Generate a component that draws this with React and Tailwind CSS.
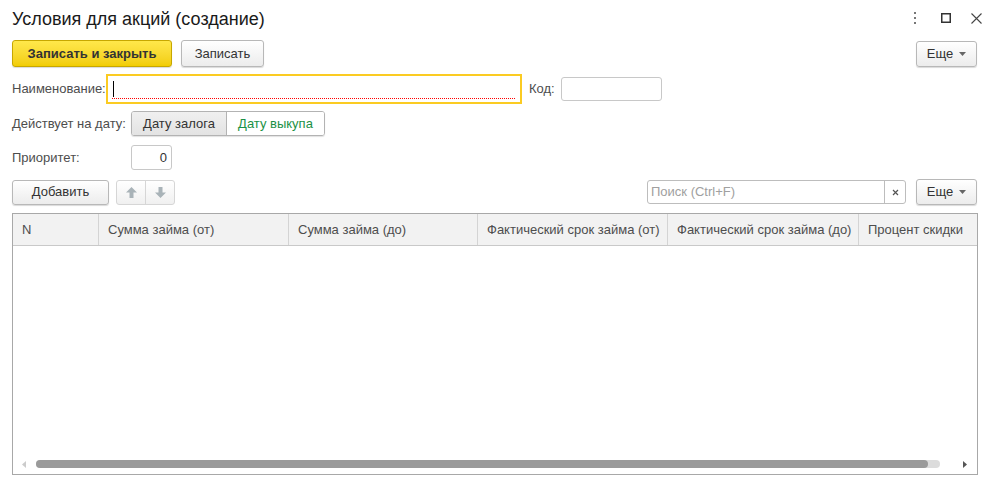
import React from "react";

const font = { fontFamily: '"Liberation Sans", Arial, sans-serif' };

function Btn({ children, className = "" }) {
  return (
    <div
      className={`flex items-center justify-center rounded-[3px] border border-[#b8b8b8] bg-gradient-to-b from-white to-[#ececec] text-[13px] text-[#333] shadow-[0_1px_1px_rgba(0,0,0,0.15)] ${className}`}
    >
      {children}
    </div>
  );
}

function More({ className = "" }) {
  return (
    <Btn className={`w-[61px] h-[26px] gap-[6px] ${className}`}>
      <span>Еще</span>
      <svg width="7" height="4" viewBox="0 0 7 4"><path d="M0 0h7L3.5 4z" fill="#666" /></svg>
    </Btn>
  );
}

export default function App() {
  const cols = [
    { t: "N", w: 86 },
    { t: "Сумма займа (от)", w: 190 },
    { t: "Сумма займа (до)", w: 189 },
    { t: "Фактический срок займа (от)", w: 190 },
    { t: "Фактический срок займа (до)", w: 191 },
    { t: "Процент скидки", w: 119 },
  ];
  return (
    <div style={font} className="w-[996px] h-[485px] bg-white text-[#4d4d4d] text-[13px] overflow-hidden relative">
      {/* Title bar */}
      <div className="flex items-center h-[36px] pl-[12px] pr-[14px]">
        <div className="text-[18px] text-[#1a1a1a] pt-[1px] leading-none">Условия для акций (создание)</div>
        <div className="ml-auto flex items-center">
          <svg width="4" height="12" viewBox="0 0 4 12" className="mr-[24px]">
            <rect x="1" y="0" width="2" height="2" fill="#777" />
            <rect x="1" y="5" width="2" height="2" fill="#777" />
            <rect x="1" y="10" width="2" height="2" fill="#777" />
          </svg>
          <svg width="10" height="10" viewBox="0 0 10 10" className="mr-[20px]">
            <rect x="0.75" y="0.75" width="8.5" height="8.5" fill="none" stroke="#333" strokeWidth="1.5" />
          </svg>
          <svg width="11" height="11" viewBox="0 0 11 11">
            <path d="M0.5 0.5L10.5 10.5M10.5 0.5L0.5 10.5" stroke="#444" strokeWidth="1.1" />
          </svg>
        </div>
      </div>

      {/* Command bar */}
      <div className="flex items-center pl-[12px] pr-[19px] mt-[4px] h-[27px]">
        <div className="flex items-center justify-center w-[160px] h-[27px] rounded-[3px] border border-[#c7a700] bg-gradient-to-b from-[#ffe84a] to-[#f2cd00] text-[13px] font-bold text-[#333] shadow-[0_1px_1px_rgba(0,0,0,0.15)]">
          Записать и закрыть
        </div>
        <Btn className="w-[83px] h-[27px] ml-[9px]">Записать</Btn>
        <More className="ml-auto" />
      </div>

      {/* Name row */}
      <div className="flex items-center px-[12px] mt-[7px] h-[30px]">
        <span className="w-[94px]">Наименование:</span>
        <div className="w-[416px] h-[30px] border-[2px] border-[#fbcb22] bg-white relative flex items-center pl-[5px]">
          <div className="w-px h-[16px] bg-black" />
          <svg className="absolute left-[4px] bottom-[3px]" width="404" height="1" viewBox="0 0 404 1">
            <line x1="0" y1="0.5" x2="404" y2="0.5" stroke="#ff0000" strokeWidth="1" strokeDasharray="1 1" />
          </svg>
        </div>
        <span className="ml-[7px] w-[32px]">Код:</span>
        <div className="w-[101px] h-[24px] border border-[#c8c8c8] rounded-[3px]" />
      </div>

      {/* Date row */}
      <div className="flex items-center px-[12px] mt-[7px] h-[25px]">
        <span className="w-[119px]">Действует на дату:</span>
        <div className="flex h-[25px] rounded-[3px] border border-[#b3b3b3] overflow-hidden shadow-[0_1px_1px_rgba(0,0,0,0.12)]">
          <div className="w-[95px] flex items-center justify-center bg-gradient-to-b from-[#f0f0f0] to-[#e3e3e3] text-[#333] border-r border-[#b3b3b3]">Дату залога</div>
          <div className="w-[97px] flex items-center justify-center bg-white text-[#1b9146]">Дату выкупа</div>
        </div>
      </div>

      {/* Priority */}
      <div className="flex items-center px-[12px] mt-[9px] h-[25px]">
        <span className="w-[119px]">Приоритет:</span>
        <div className="w-[41px] h-[25px] border border-[#c8c8c8] rounded-[3px] flex items-center justify-end pr-[4px] text-[#333]">0</div>
      </div>

      {/* Table toolbar */}
      <div className="flex items-center pl-[12px] pr-[19px] mt-[9px] h-[26px]">
        <Btn className="w-[97px] h-[25px]">Добавить</Btn>
        <div className="ml-[7px] flex h-[25px] w-[59px] rounded-[3px] border border-[#d6d6d6] bg-gradient-to-b from-white to-[#f0f0f0] overflow-hidden">
          <div className="w-[29px] flex items-center justify-center border-r border-[#d6d6d6]">
            <svg width="11" height="11" viewBox="0 0 11 11"><path d="M5.5 0L11 5.5H7.5V11h-4V5.5H0z" fill="#a9b3b8" /></svg>
          </div>
          <div className="flex-1 flex items-center justify-center">
            <svg width="11" height="11" viewBox="0 0 11 11"><path d="M5.5 11L11 5.5H7.5V0h-4v5.5H0z" fill="#a9b3b8" /></svg>
          </div>
        </div>
        <div className="ml-auto flex h-[24px] w-[259px] border border-[#bdbdbd] rounded-[3px] bg-white">
          <div className="flex-1 flex items-center pl-[3px] text-[#a0a0a0]">Поиск (Ctrl+F)</div>
          <div className="w-[21px] border-l border-[#bdbdbd] flex items-center justify-center">
            <svg width="7" height="7" viewBox="0 0 7 7"><path d="M1 1L6 6M6 1L1 6" stroke="#555" strokeWidth="1.2" /></svg>
          </div>
        </div>
        <More className="ml-[10px]" />
      </div>

      {/* Table */}
      <div className="mx-[12px] mt-[8px] w-[966px] h-[262px] border border-[#a8a8a8] flex flex-col overflow-hidden">
        <div className="flex h-[32px] bg-[#f2f2f2] border-b border-[#c9c9c9] shrink-0">
          {cols.map((c, i) => (
            <div
              key={i}
              style={{ width: c.w }}
              className={`shrink-0 flex items-center px-[9px] text-[#4d4d4d] whitespace-nowrap ${i < cols.length - 1 ? "border-r border-[#d4d4d4]" : ""}`}
            >
              {c.t}
            </div>
          ))}
        </div>
        <div className="flex-1" />
        <div className="h-[14px] flex items-center pl-[9px] pr-[10px] mb-[3px]">
          <svg width="4" height="7" viewBox="0 0 4 7"><path d="M4 0v7L0 3.5z" fill="#ccc" /></svg>
          <div className="ml-[10px] w-[904px] h-[8px] rounded-[4px] bg-[#dcdcdc] flex">
            <div className="w-[892px] h-[8px] rounded-[4px] bg-[#9a9a9a]" />
          </div>
          <svg width="4" height="7" viewBox="0 0 4 7" className="ml-auto"><path d="M0 0v7L4 3.5z" fill="#555" /></svg>
        </div>
      </div>
    </div>
  );
}
